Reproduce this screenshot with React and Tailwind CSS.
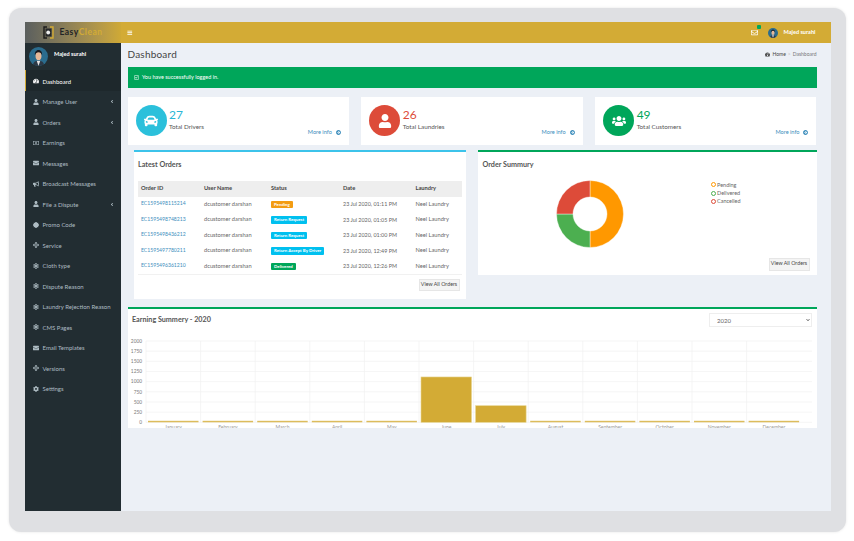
import React from "react";
import {
    FaTachometerAlt, FaUser, FaRegMoneyBillAlt, FaEnvelope, FaBullhorn, FaCertificate,
    FaArrowsAlt, FaSnowflake, FaCog, FaRegCheckSquare, FaCar, FaUsers, FaArrowCircleRight,
    FaBars, FaAngleLeft, FaRegEnvelope, FaChevronDown,
} from "react-icons/fa";

const menu = [
    { label: "Dashboard", icon: FaTachometerAlt, active: true },
    { label: "Manage User", icon: FaUser, arrow: true },
    { label: "Orders", icon: FaUser, arrow: true },
    { label: "Earnings", icon: FaRegMoneyBillAlt },
    { label: "Messages", icon: FaEnvelope },
    { label: "Broadcast Messages", icon: FaBullhorn },
    { label: "File a Dispute", icon: FaUser, arrow: true },
    { label: "Promo Code", icon: FaCertificate },
    { label: "Service", icon: FaArrowsAlt },
    { label: "Cloth type", icon: FaSnowflake },
    { label: "Dispute Reason", icon: FaSnowflake },
    { label: "Laundry Rejection Reason", icon: FaSnowflake },
    { label: "CMS Pages", icon: FaSnowflake },
    { label: "Email Templates", icon: FaEnvelope },
    { label: "Versions", icon: FaArrowsAlt },
    { label: "Settings", icon: FaCog },
];

const orders = [
    { id: "EC1595498115214", status: "Pending", color: "bg-[#f39c12]", date: "23 Jul 2020, 01:11 PM" },
    { id: "EC1595498748213", status: "Return Request", color: "bg-[#00c0ef]", date: "23 Jul 2020, 01:05 PM" },
    { id: "EC1595498436212", status: "Return Request", color: "bg-[#00c0ef]", date: "23 Jul 2020, 01:00 PM" },
    { id: "EC1595497780211", status: "Return Accept By Driver", color: "bg-[#00c0ef]", date: "23 Jul 2020, 12:49 PM" },
    { id: "EC1595496361210", status: "Delivered", color: "bg-[#00a65a]", date: "23 Jul 2020, 12:26 PM" },
];

const months = ["January", "February", "March", "April", "May", "June", "July", "August", "September", "October", "November", "December"];
const values = [20, 20, 20, 20, 20, 1115, 408, 20, 20, 20, 20, 20];

function Avatar({ size }) {
    return (
        <svg width={size} height={size} viewBox="0 0 32 32" className="shrink-0 rounded-full">
            <rect width="32" height="32" fill="#2b6c8e" />
            <path d="M6 32c1-7 5-9 10-9s9 2 10 9z" fill="#2c3846" />
            <path d="M13 23l3 9 3-9z" fill="#e8e4e4" />
            <ellipse cx="16" cy="15" rx="5" ry="7" fill="#e6b898" />
            <path d="M10 14c-1-6 3-9 6-9s7 3 6 9c-1-3-3-5-6-5s-5 2-6 5z" fill="#1a1a1f" />
        </svg>
    );
}

function Logo() {
    return (
        <svg width="11" height="13" viewBox="0 0 11 13" className="shrink-0">
            <path d="M4 1H1v11h3" fill="none" stroke="#1c1c1c" strokeWidth="1.4" />
            <path d="M7 1h3v11H7" fill="none" stroke="#d3ab35" strokeWidth="1.4" />
            <rect x="2.5" y="2.5" width="6" height="8" fill="#26282a" />
            <circle cx="5.2" cy="6.5" r="1.9" fill="#eee" />
        </svg>
    );
}

function Sidebar() {
    return (
        <aside className="w-[96.5px] shrink-0 bg-[#222d32] flex flex-col">
            <div className="h-[21px] flex items-center justify-center gap-[5.5px] bg-gradient-to-r from-[#5b5f5e] to-[#cfa935] text-[8.5px] font-bold tracking-[0.5px]">
                <Logo />
                <span><span className="text-[#1f2326]">Easy</span><span className="text-[#d3ab35]">Clean</span></span>
            </div>
            <div className="h-[27px] flex items-center pl-[4.5px] gap-[6px]">
                <Avatar size={19} />
                <span className="text-white text-[5.6px] font-bold -mt-[4px]">Majed surahi</span>
            </div>
            <nav>
                {menu.map((m) => (
                    <div
                        key={m.label}
                        className={`h-[20.5px] flex items-center pt-[1.5px] pr-[7px] text-[6px] whitespace-nowrap ${
                            m.active ? "bg-[#1e282c] border-l border-[#d3ab35] text-white pl-[7px]" : "text-[#aebcc3] pl-[8px]"
                        }`}
                    >
                        <m.icon className="w-[6px] h-[6px] mr-[4px] shrink-0" />
                        <span>{m.label}</span>
                        {m.arrow && <FaAngleLeft className="ml-auto w-[4px] h-[5px]" />}
                    </div>
                ))}
            </nav>
        </aside>
    );
}

function Navbar() {
    return (
        <header className="h-[21px] shrink-0 bg-[#d3ab35] flex items-center pl-[6px] pr-[15px] text-white">
            <FaBars className="w-[5.5px] h-[5.5px]" />
            <div className="ml-auto flex items-center">
                <div className="relative mr-[10px]">
                    <FaRegEnvelope className="w-[7px] h-[7px]" />
                    <span className="absolute -top-[4px] -right-[3px] w-[4px] h-[4px] bg-[#00a65a] rounded-[1px]" />
                </div>
                <Avatar size={10} />
                <span className="ml-[5px] text-[5.6px] font-bold">Majed surahi</span>
            </div>
        </header>
    );
}

function Stat({ icon: Icon, bg, text, value, label }) {
    return (
        <div className="h-[47.5px] bg-white flex items-center pl-[8px] relative">
            <div className={`w-[31px] h-[31px] rounded-full ${bg} flex items-center justify-center text-white`}>
                <Icon className="w-[14px] h-[14px]" />
            </div>
            <div className="ml-[2.5px] -mt-[3px]">
                <div className={`text-[12px] leading-[15px] ${text}`}>{value}</div>
                <div className="text-[6.3px] leading-[9px] text-[#555]">{label}</div>
            </div>
            <div className="ml-auto self-end mb-[8px] mr-[8px] flex items-center gap-[4px] text-[5.6px] text-[#3c8dbc]">
                More info <FaArrowCircleRight className="w-[5px] h-[5px]" />
            </div>
        </div>
    );
}

function LatestOrders() {
    return (
        <section className="ml-[6.5px] h-[149px] bg-white border-t-2 border-[#3cc3ea] px-[4px]">
            <h3 className="h-[28.5px] pb-[2px] flex items-center text-[7.2px] font-bold text-[#555]">Latest Orders</h3>
            <table className="w-[323.5px] table-fixed text-[5.7px] text-[#666] border-b border-[#f1f1f1]">
                <thead>
                    <tr className="h-[16px] bg-[#eeeeee] text-left text-[#444]">
                        <th className="w-[66px] pl-[3px] font-bold">Order ID</th>
                        <th className="w-[67px] font-bold">User Name</th>
                        <th className="w-[72px] font-bold">Status</th>
                        <th className="w-[72.5px] font-bold">Date</th>
                        <th className="font-bold">Laundry</th>
                    </tr>
                </thead>
                <tbody>
                    {orders.map((o) => (
                        <tr key={o.id} className="h-[15.5px]">
                            <td className="pl-[3px] text-[#3c8dbc] text-[5.1px]">{o.id}</td>
                            <td>dcustomer darshan</td>
                            <td>
                                <span className={`inline-block ${o.color} text-white text-[4.4px] font-bold leading-[7.5px] px-[3px] rounded-[1px] whitespace-nowrap`}>
                                    {o.status}
                                </span>
                            </td>
                            <td className="text-[5.4px]">{o.date}</td>
                            <td>Neel Laundry</td>
                        </tr>
                    ))}
                </tbody>
            </table>
            <div className="flex justify-end mt-[4px] pr-[2.5px]">
                <button className="h-[12.5px] w-[41px] bg-[#f4f4f4] border border-[#e6e6e6] text-[5.3px] text-[#444]">View All Orders</button>
            </div>
        </section>
    );
}

function OrderSummary() {
    return (
        <section className="h-[124.5px] bg-white border-t-2 border-[#00a65a] relative flex flex-col">
            <h3 className="h-[27px] flex items-center pl-[4.5px] text-[7.2px] font-bold text-[#555]">Order Summury</h3>
            <div className="flex-1 flex pl-[78px]">
                <svg width="68" height="68" viewBox="0 0 68 68" className="mt-[0.5px]">
                    <path d="M34 .5A33.5 33.5 0 0 1 34 67.5V51A17 17 0 0 0 34 17z" fill="#ff9800" stroke="#fff" strokeWidth=".4" />
                    <path d="M34 67.5A33.5 33.5 0 0 1 .5 34H17A17 17 0 0 0 34 51z" fill="#4caf50" stroke="#fff" strokeWidth=".4" />
                    <path d="M.5 34A33.5 33.5 0 0 1 34 .5V17A17 17 0 0 0 17 34z" fill="#dd4b39" stroke="#fff" strokeWidth=".4" />
                </svg>
                <ul className="ml-[86.5px] mt-[1.5px] text-[5.5px] leading-[8.4px] text-[#666]">
                    {[["Pending", "border-[#ff9800]"], ["Delivered", "border-[#4caf50]"], ["Cancelled", "border-[#dd4b39]"]].map(([t, c]) => (
                        <li key={t} className="flex items-center gap-[1.5px]">
                            <span className={`w-[5px] h-[5px] rounded-full border-[0.7px] ${c}`} />
                            {t}
                        </li>
                    ))}
                </ul>
            </div>
            <button className="absolute right-[7px] bottom-[4px] h-[12.5px] w-[41px] bg-[#f4f4f4] border border-[#e6e6e6] text-[5.3px] text-[#444]">View All Orders</button>
        </section>
    );
}

function EarningChart() {
    const x0 = 18;
    const step = 54.6;
    const base = 113.3;
    const scale = 81.3 / 2000;
    return (
        <svg width="689" height="119" viewBox="0 0 689 119" className="absolute left-0 top-0" fontFamily="Lato" fontSize="4.8" fill="#777">
            {[0, 250, 500, 750, 1000, 1250, 1500, 1750, 2000].map((v) => (
                <g key={v}>
                    <line x1={x0} x2="684" y1={base - v * scale} y2={base - v * scale} stroke="#f1f1f1" strokeWidth=".7" />
                    <text x={14} y={base - v * scale + 1.8} textAnchor="end">{v}</text>
                </g>
            ))}
            {months.map((m, i) => {
                const small = values[i] === 20;
                const h = small ? 1.5 : values[i] * scale;
                return (
                    <g key={m}>
                        <line x1={x0 + step * i} x2={x0 + step * i} y1="32" y2={base} stroke="#f1f1f1" strokeWidth=".7" />
                        <rect x={x0 + 2 + step * i} y={base - h} width="50.5" height={h} fill={small ? "#dcbc5c" : "#d3ab35"} stroke={small ? "none" : "#e6d48f"} strokeWidth=".6" />
                        <text x={x0 + 27.3 + step * i} y={base + 7} textAnchor="middle" fontSize="5" fill="#999">{m}</text>
                    </g>
                );
            })}
        </svg>
    );
}

function EarningSummary() {
    return (
        <section className="mt-[8px] h-[121px] bg-white border-t-2 border-[#00a65a] relative">
            <EarningChart />
            <div className="relative flex items-center h-[22px] px-[4.5px]">
                <h3 className="text-[7.2px] pt-[1px] font-bold text-[#555]">Earning Summery - 2020</h3>
                <div className="relative ml-auto">
                    <select className="appearance-none block w-[103px] h-[14.5px] bg-white border border-[#eeeeee] text-[6px] text-[#666] pl-[7px]" defaultValue="2020">
                        <option>2020</option>
                    </select>
                    <FaChevronDown className="absolute right-[2px] top-[5px] w-[4px] h-[4px] text-[#555]" />
                </div>
            </div>
        </section>
    );
}

function App() {
    return (
        <div className="w-[854px] h-[541px] bg-white pl-[8.5px] pr-[8.5px] pt-[8px] pb-[9px] overflow-hidden font-['Lato',sans-serif]">
            <div className="h-full bg-[#dfe0e3] rounded-[12px] shadow-[0_0_3px_#e6e6e6] pl-[16px] pr-[6.5px] pt-[14px] pb-[21.5px]">
                <div className="h-full w-[806px] flex bg-[#ecf0f6]">
                    <Sidebar />
                    <div className="flex-1 min-w-0 flex flex-col">
                        <Navbar />
                        <main className="pl-[6.5px] pr-[14px]">
                            <div className="h-[23.5px] flex items-center justify-between">
                                <h1 className="text-[10px] text-[#444] tracking-[0.2px]">Dashboard</h1>
                                <div className="flex items-center gap-[2px] text-[5px] text-[#777]">
                                    <FaTachometerAlt className="w-[5px] h-[5px] text-[#444]" />
                                    <span className="text-[#444]">Home</span>
                                    <span className="text-[#bbb]">&gt;</span>
                                    <span>Dashboard</span>
                                </div>
                            </div>
                            <div className="h-[21.5px] bg-[#00a65a] flex items-center pl-[6.5px] gap-[3px] text-white text-[5.5px]">
                                <FaRegCheckSquare className="w-[5px] h-[5px]" />
                                You have successfully logged in.
                            </div>
                            <div className="grid grid-cols-3 gap-[12.5px] mt-[9px]">
                                <Stat icon={FaCar} bg="bg-[#2bc0db]" text="text-[#2bb6d6]" value="27" label="Total Drivers" />
                                <Stat icon={FaUser} bg="bg-[#dd4b39]" text="text-[#dd4b39]" value="26" label="Total Laundries" />
                                <Stat icon={FaUsers} bg="bg-[#00a65a]" text="text-[#00a65a]" value="49" label="Total Customers" />
                            </div>
                            <div className="grid grid-cols-[338.5px_338.5px] gap-[12px] mt-[5.5px]">
                                <LatestOrders />
                                <OrderSummary />
                            </div>
                            <EarningSummary />
                        </main>
                    </div>
                </div>
            </div>
        </div>
    );
}

export default App;
